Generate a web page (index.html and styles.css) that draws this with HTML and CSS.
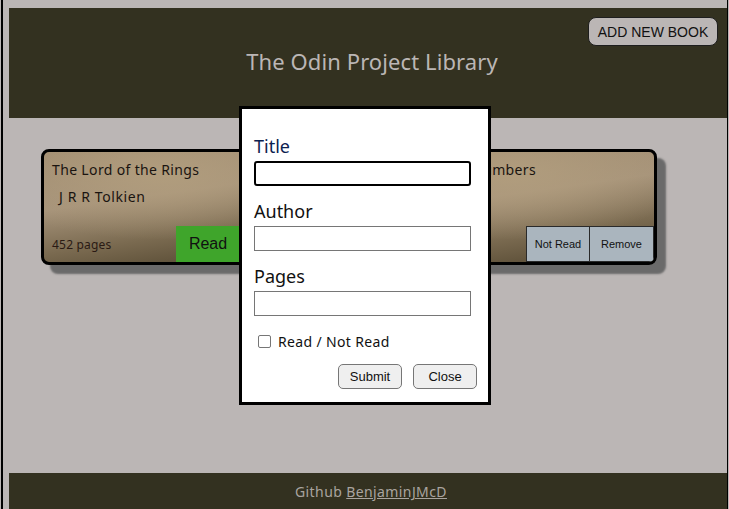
FILE: index.html
```html
<!DOCTYPE html>
<html lang="en">
<head>
<meta charset="utf-8">
<title>The Odin Project Library</title>
<link rel="stylesheet" href="styles.css">
</head>
<body>
<div class="frame">
  <header class="top">
    <button class="add-btn" type="button">ADD NEW BOOK</button>
    <h1 class="site-title">The Odin Project Library</h1>
  </header>
  <main class="library">
    <article class="card">
      <p class="card-title">The Lord of the Rings</p>
      <p class="card-author">J R R Tolkien</p>
      <div class="card-bottom">
        <span class="card-pages">452 pages</span>
        <div class="card-actions">
          <button class="status read" type="button">Read</button>
          <button class="remove" type="button">Remove</button>
        </div>
      </div>
    </article>
    <article class="card">
      <p class="card-title">A Book of Numbers</p>
      <p class="card-author">Unknown</p>
      <div class="card-bottom">
        <span class="card-pages">120 pages</span>
        <div class="card-actions">
          <button class="status unread" type="button">Not Read</button>
          <button class="remove" type="button">Remove</button>
        </div>
      </div>
    </article>
  </main>
  <footer class="foot">
    <span>Github <a href="#">BenjaminJMcD</a></span>
  </footer>
</div>
<div class="modal">
  <form class="book-form">
    <label class="field-label focus" for="title">Title</label>
    <input class="field focused" id="title" type="text">
    <label class="field-label" for="author">Author</label>
    <input class="field" id="author" type="text">
    <label class="field-label" for="pages">Pages</label>
    <input class="field" id="pages" type="text">
    <div class="check-row">
      <span class="checkbox"></span>
      <span class="check-text">Read / Not Read</span>
    </div>
    <div class="form-actions">
      <button class="form-btn" type="button">Submit</button>
      <button class="form-btn" type="button">Close</button>
    </div>
  </form>
</div>
</body>
</html>
```
FILE: styles.css
```css
* { box-sizing: border-box; }
html, body {
  margin: 0;
  padding: 0;
  background: #bbb6b5;
  height: 100%;
  overflow: hidden;
}
body {
  font-family: "Noto Sans", sans-serif;
  position: relative;
}
.frame {
  margin-left: 1px;
  margin-right: 1px;
  border-left: 2px solid #000;
  border-right: 1px solid #000;
  padding: 8px 0 0 6px;
  min-height: 520px;
  display: flex;
  flex-direction: column;
}
.top {
  background: #333120;
  height: 110px;
  display: flex;
  flex-direction: column;
  padding: 9px 9px 0 0;
}
.add-btn {
  align-self: flex-end;
  width: 130px;
  height: 29px;
  background: #bbb6b5;
  border: 1px solid #1e1e1e;
  border-radius: 8px;
  font-family: "Liberation Sans", Arial, sans-serif;
  font-size: 14px;
  color: #111;
  padding: 0;
}
.site-title {
  margin: 2px 0 0 0;
  padding-left: 17px;
  text-align: center;
  font-weight: 400;
  font-size: 22px;
  letter-spacing: 0.1px;
  color: #bbb6b5;
  line-height: 26px;
}
.library {
  height: 355px;
  display: flex;
  gap: 84px;
  padding: 31px 0 0 32px;
  align-items: flex-start;
}
.card {
  width: 266px;
  height: 116px;
  border: 3px solid #000;
  border-radius: 8px;
  background:
    radial-gradient(ellipse 70% 60% at 45% 20%, rgba(178,158,126,0.9), rgba(178,158,126,0) 100%),
    linear-gradient(172deg, #a08c70 0%, #a6937a 40%, #7a6a50 70%, #4f432d 100%);
  box-shadow: 9px 9px 2px #6a6a6a;
  display: flex;
  flex-direction: column;
  overflow: hidden;
  color: #1a1410;
}
.card-title {
  margin: 9px 0 0 8px;
  font-size: 14px;
  letter-spacing: 0.35px;
  line-height: 18px;
}
.card-author {
  margin: 9px 0 0 15px;
  font-size: 14px;
  letter-spacing: 0.6px;
  line-height: 18px;
}
.card-bottom {
  margin-top: auto;
  display: flex;
  align-items: center;
  justify-content: space-between;
  height: 36px;
}
.card-pages {
  padding-left: 8px;
  font-size: 12px;
  letter-spacing: 0.2px;
  color: #2a1a14;
}
.card-actions {
  display: flex;
  height: 36px;
}
.status, .remove {
  height: 36px;
  width: 64px;
  padding: 0;
  font-family: "Liberation Sans", Arial, sans-serif;
  color: #111;
}
.read {
  background: #3fa52b;
  border: none;
  font-size: 16px;
}
.unread {
  background: #aab5be;
  border: 1px solid #2a2a2a;
  font-size: 11px;
}
.remove {
  background: #aab5be;
  border: 1px solid #2a2a2a;
  border-left: none;
  font-size: 11px;
}
.foot {
  height: 40px;
  background: #333120;
  display: flex;
  justify-content: center;
  padding: 9px 0 0 6px;
  font-size: 14px;
  letter-spacing: 0.4px;
  color: #a9a49f;
}
.foot a { color: #a9a49f; }

.modal {
  position: absolute;
  left: 239px;
  top: 106px;
  width: 252px;
  height: 299px;
  background: #fff;
  border: 3px solid #000;
}
.book-form {
  display: flex;
  flex-direction: column;
  padding: 26px 0 0 12px;
}
.field-label {
  font-size: 18px;
  line-height: 22px;
  color: #111;
  margin-top: 14px;
}
.field-label.focus {
  margin-top: 0;
  color: #0c2150;
}
.field {
  width: 217px;
  height: 25px;
  border: 1px solid #767676;
  border-radius: 0;
  margin-top: 4px;
  padding: 1px 2px;
}
.field.focused {
  border: 2px solid #000;
  border-radius: 3px;
}
.check-row {
  display: flex;
  align-items: center;
  margin-top: 16px;
  padding-left: 4px;
  gap: 7px;
}
.checkbox {
  width: 13px;
  height: 13px;
  border: 1px solid #767676;
  border-radius: 2px;
  background: #fff;
}
.check-text {
  font-size: 14px;
  letter-spacing: 0.35px;
  color: #111;
}
.form-actions {
  display: flex;
  justify-content: flex-end;
  gap: 11px;
  margin-top: 13px;
  padding-right: 11px;
}
.form-btn {
  height: 25px;
  width: 64px;
  background: #efefef;
  border: 1px solid #767676;
  border-radius: 5px;
  font-family: "Liberation Sans", Arial, sans-serif;
  font-size: 13px;
  color: #111;
  padding: 0;
}
```
